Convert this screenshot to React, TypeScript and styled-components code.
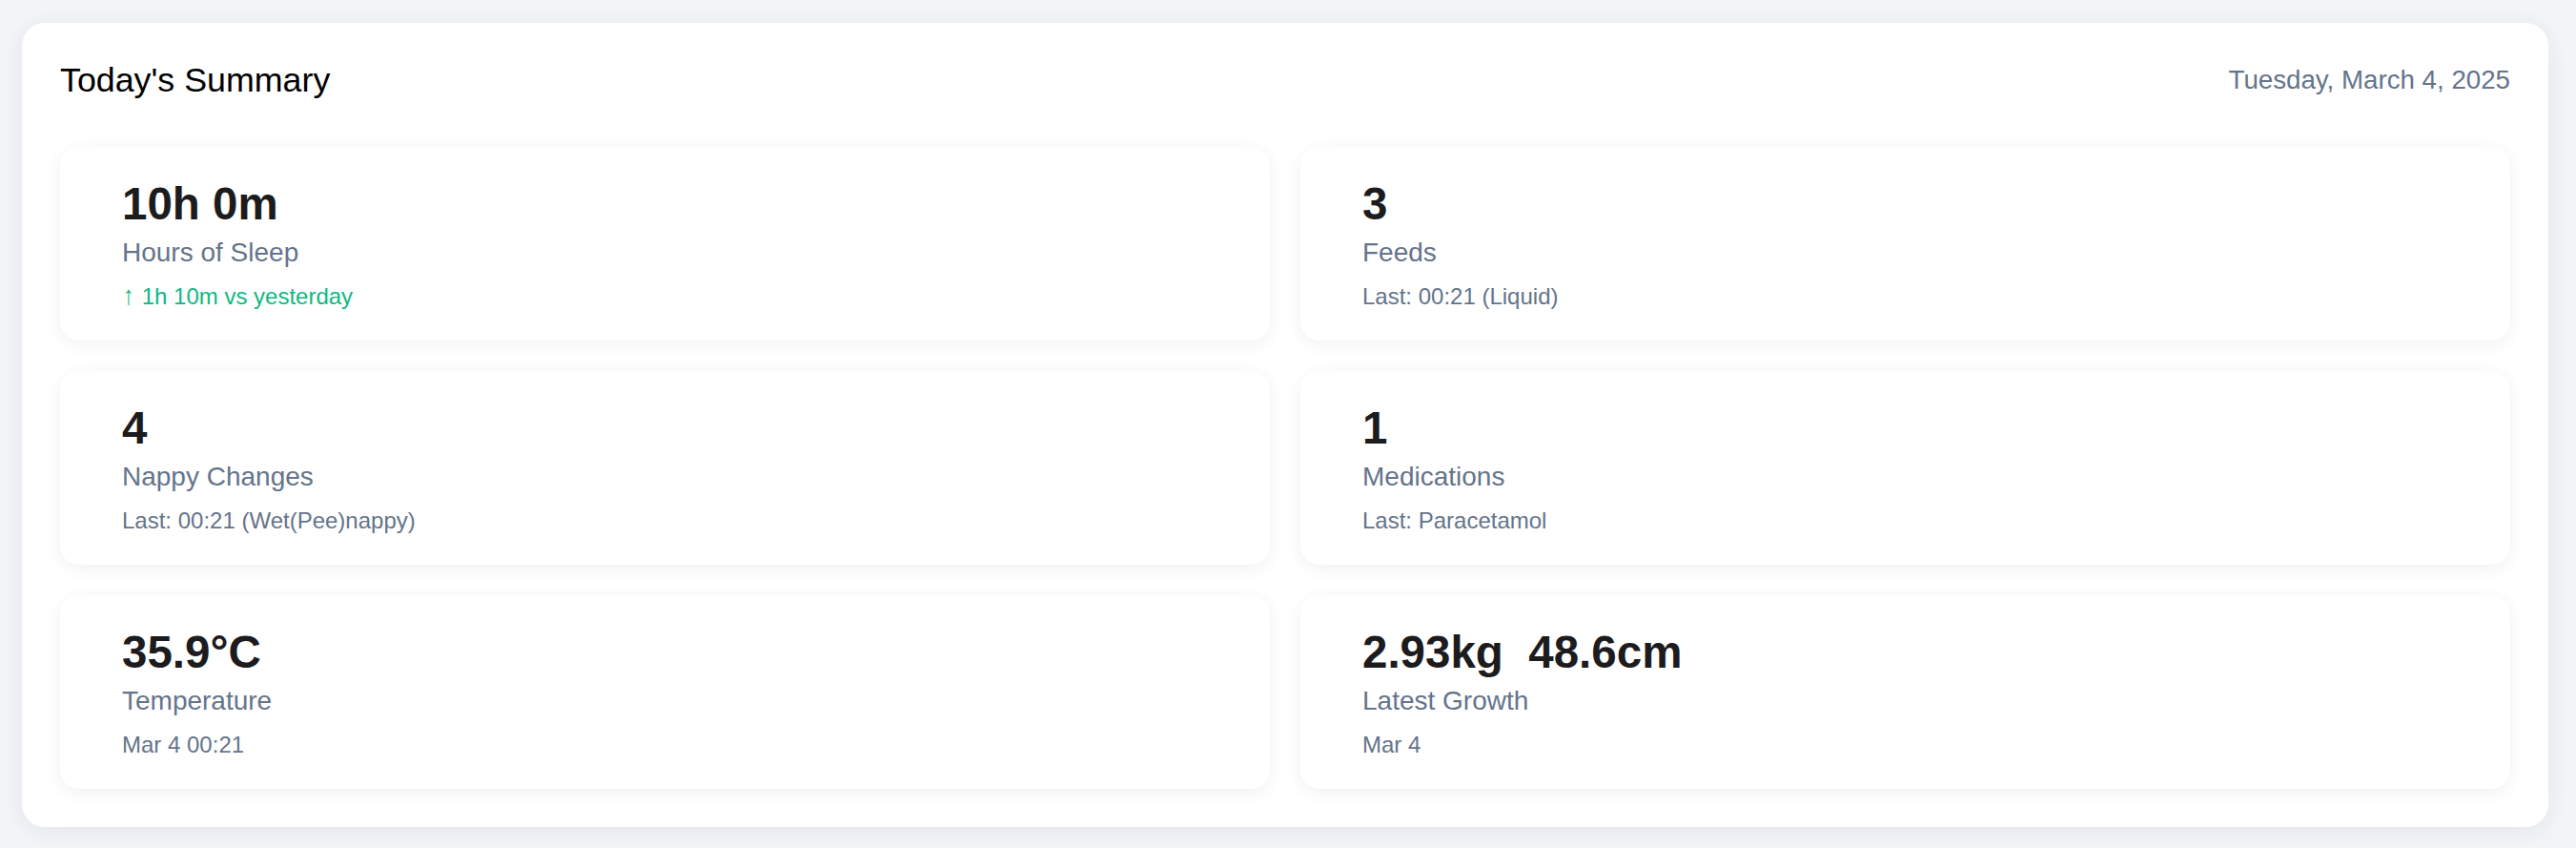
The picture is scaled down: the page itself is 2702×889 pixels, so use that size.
import React from "react";
import styled, { createGlobalStyle } from "styled-components";

const GlobalStyle = createGlobalStyle`
  html, body {
    margin: 0;
    padding: 0;
    background: #f3f4f8;
    font-family: "Liberation Sans", Arial, sans-serif;
  }
  * { box-sizing: border-box; }
`;

const Page = styled.div`
  padding: 24px 29px 22px 23px;
  min-height: 889px;
`;

const SummaryCard = styled.section`
  background: #ffffff;
  border-radius: 24px;
  padding: 40px;
  box-shadow: 0 4px 24px rgba(30, 41, 59, 0.07);
`;

const Header = styled.header`
  display: flex;
  align-items: center;
  justify-content: space-between;
  margin-bottom: 50px;
`;

const Title = styled.h2`
  margin: 0;
  font-size: 35.8px;
  line-height: 40px;
  font-weight: 400;
  color: #000000;
`;

const DateText = styled.span`
  font-size: 27.7px;
  line-height: 32px;
  color: #64748b;
`;

const Grid = styled.div`
  display: grid;
  grid-template-columns: 1fr 1fr;
  gap: 32px;
`;

const StatCard = styled.div`
  background: #ffffff;
  border-radius: 20px;
  padding: 33px 40px 32px 65px;
  box-shadow: 0 4px 18px rgba(0, 0, 0, 0.06);
  display: flex;
  flex-direction: column;
`;

const Value = styled.div`
  font-size: 47.5px;
  line-height: 54px;
  font-weight: 700;
  color: #1c1c1e;
  white-space: pre;
`;

const Label = styled.div`
  margin-top: 8px;
  font-size: 28px;
  line-height: 32px;
  color: #64748b;
`;

const Detail = styled.div<{ $tone?: "up" | "muted" }>`
  margin-top: 16px;
  font-size: 24px;
  line-height: 28px;
  color: ${(p) => (p.$tone === "up" ? "#10b981" : "#64748b")};
`;

const Arrow = styled.span`
  display: inline-block;
  font-size: 28px;
  line-height: 24px;
  transform: scaleX(0.85);
`;

type Stat = {
  value: string;
  label: string;
  detail: string;
  tone?: "up" | "muted";
};

const stats: Stat[] = [
  { value: "10h 0m", label: "Hours of Sleep", detail: "1h 10m vs yesterday", tone: "up" },
  { value: "3", label: "Feeds", detail: "Last: 00:21 (Liquid)" },
  { value: "4", label: "Nappy Changes", detail: "Last: 00:21 (Wet(Pee)nappy)" },
  { value: "1", label: "Medications", detail: "Last: Paracetamol" },
  { value: "35.9°C", label: "Temperature", detail: "Mar 4 00:21" },
  { value: "2.93kg  48.6cm", label: "Latest Growth", detail: "Mar 4" },
];

export default function App() {
  return (
    <>
      <GlobalStyle />
      <Page>
        <SummaryCard>
          <Header>
            <Title>Today's Summary</Title>
            <DateText>Tuesday, March 4, 2025</DateText>
          </Header>
          <Grid>
            {stats.map((s) => (
              <StatCard key={s.label}>
                <Value>{s.value}</Value>
                <Label>{s.label}</Label>
                <Detail $tone={s.tone}>
                  {s.tone === "up" ? (
                    <>
                      <Arrow>↑</Arrow> {s.detail}
                    </>
                  ) : (
                    s.detail
                  )}
                </Detail>
              </StatCard>
            ))}
          </Grid>
        </SummaryCard>
      </Page>
    </>
  );
}
